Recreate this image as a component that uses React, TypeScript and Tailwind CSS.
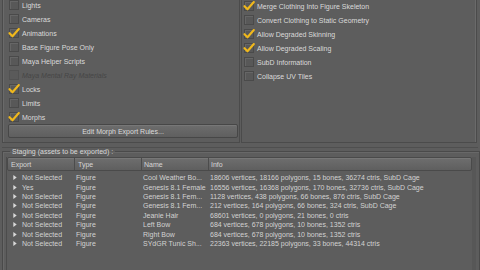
import React from 'react';

type Opt = { label: string; checked?: boolean; disabled?: boolean };

const leftOpts: Opt[] = [
  { label: 'Lights' },
  { label: 'Cameras' },
  { label: 'Animations', checked: true },
  { label: 'Base Figure Pose Only' },
  { label: 'Maya Helper Scripts' },
  { label: 'Maya Mental Ray Materials', disabled: true },
  { label: 'Locks', checked: true },
  { label: 'Limits' },
  { label: 'Morphs', checked: true },
];

const rightOpts: Opt[] = [
  { label: 'Merge Clothing Into Figure Skeleton', checked: true },
  { label: 'Convert Clothing to Static Geometry' },
  { label: 'Allow Degraded Skinning', checked: true },
  { label: 'Allow Degraded Scaling', checked: true },
  { label: 'SubD Information' },
  { label: 'Collapse UV Tiles' },
];

const rows = [
  ['Not Selected', 'Figure', 'Cool Weather Bo...', '18606 vertices, 18166 polygons, 15 bones, 36274 ctris, SubD Cage'],
  ['Yes', 'Figure', 'Genesis 8.1 Female', '16556 vertices, 16368 polygons, 170 bones, 32736 ctris, SubD Cage'],
  ['Not Selected', 'Figure', 'Genesis 8.1 Fem...', '1128 vertices, 438 polygons, 66 bones, 876 ctris, SubD Cage'],
  ['Not Selected', 'Figure', 'Genesis 8.1 Fem...', '212 vertices, 164 polygons, 66 bones, 324 ctris, SubD Cage'],
  ['Not Selected', 'Figure', 'Jeanie Hair', '68601 vertices, 0 polygons, 21 bones, 0 ctris'],
  ['Not Selected', 'Figure', 'Left Bow', '684 vertices, 678 polygons, 10 bones, 1352 ctris'],
  ['Not Selected', 'Figure', 'Right Bow', '684 vertices, 678 polygons, 10 bones, 1352 ctris'],
  ['Not Selected', 'Figure', 'SYdGR Tunic Sh...', '22363 vertices, 22185 polygons, 33 bones, 44314 ctris'],
];

function Check({ opt }: { opt: Opt }) {
  return (
    <div className="flex h-[14px] items-center">
      <div
        className={`relative h-[10px] w-[10px] shrink-0 border ${
          opt.disabled ? 'border-[#525252] bg-[#5a5a5a]' : 'border-[#4a4a4a] bg-[#585858] shadow-[inset_1px_1px_0_#666]'
        }`}
      >
        {opt.checked && (
          <svg viewBox="0 0 12 10" className="absolute -left-[2px] -top-[1px] h-[10px] w-[12px]">
            <path d="M1.5 5.2 L4.5 8.3 L10.8 1" fill="none" stroke="#f0b81c" strokeWidth="2.1" strokeLinecap="round" strokeLinejoin="round" />
          </svg>
        )}
      </div>
      <span className={`ml-[3px] whitespace-nowrap ${opt.disabled ? 'italic text-[#464646]' : 'text-[#dadada]'}`}>
        {opt.label}
      </span>
    </div>
  );
}

export default function App() {
  return (
    <div
      className="h-[270px] w-[480px] overflow-hidden bg-[#5d5d5d] text-[7px] leading-none text-[#d6d6d6]"
      style={{ fontFamily: '"Liberation Sans", Arial, sans-serif' }}
    >
      <div className="flex h-[143px] pl-[2px] pr-[3px]">
        <div className="flex w-[238px] flex-col border-x border-b border-[#4b4b4b] pl-[6px] pr-[2px] shadow-[inset_1px_0_0_#6a6a6a]">
          <div className="-mt-[2px] flex flex-col">
            {leftOpts.map((o) => (
              <Check key={o.label} opt={o} />
            ))}
          </div>
          <button className="h-[14px] w-[230px] -ml-[1px] rounded-[2px] border border-[#474747] bg-gradient-to-b from-[#6d6d6d] to-[#5f5f5f] text-[7px] text-[#dcdcdc] shadow-[inset_0_1px_0_#777]">
            Edit Morph Export Rules...
          </button>
        </div>
        <div className="ml-[1px] flex flex-1 flex-col border-x border-b border-[#4b4b4b] pl-[2px] shadow-[inset_-1px_0_0_#6a6a6a]">
          <div className="-mt-[1px] flex flex-col">
            {rightOpts.map((o) => (
              <Check key={o.label} opt={o} />
            ))}
          </div>
        </div>
      </div>
      <div className="mx-[2px] mt-[4px] border-t border-[#4f4f4f]" />
      <fieldset className="mx-[2px] h-[130px] border border-b-0 border-[#4a4a4a] px-[3px] shadow-[inset_1px_1px_0_#686868]">
        <legend className="ml-[4px] px-[2px] text-[7px] text-[#d8d8d8]">Staging (assets to be exported) :</legend>
        <div className="mt-[2px] h-full border-l border-r-[4px] border-[#4c4c4c] border-r-[#575757]">
          <div className="flex h-[14px] w-[465px] items-center rounded-[2px] border border-[#4a4a4a] bg-gradient-to-b from-[#6e6e6e] to-[#5f5f5f] shadow-[inset_0_1px_0_#777]">
            <div className="flex h-full w-[67px] items-center border-r border-[#4c4c4c] pl-[3px]">Export</div>
            <div className="flex h-full w-[67px] items-center border-r border-[#4c4c4c] pl-[3px]">Type</div>
            <div className="flex h-full w-[67px] items-center border-r border-[#4c4c4c] pl-[2px]">Name</div>
            <div className="flex h-full flex-1 items-center pl-[2px]">Info</div>
          </div>
          <div className="mt-[2px] flex flex-col text-[#d2d2d2]">
            {rows.map((r, i) => (
              <div key={i} className="flex h-[9.43px] items-center whitespace-nowrap">
                <div className="flex w-[68px] items-center pl-[6px]">
                  <svg viewBox="0 0 4 6" className="h-[5px] w-[4px]">
                    <path d="M0 0 L4 3 L0 6 Z" fill="#d8d8d8" />
                  </svg>
                  <span className="ml-[5px]">{r[0]}</span>
                </div>
                <div className="w-[67px] pl-[1px]">{r[1]}</div>
                <div className="w-[67px] pl-[1px]">{r[2]}</div>
                <div className="pl-[1px]">{r[3]}</div>
              </div>
            ))}
          </div>
        </div>
      </fieldset>
    </div>
  );
}
